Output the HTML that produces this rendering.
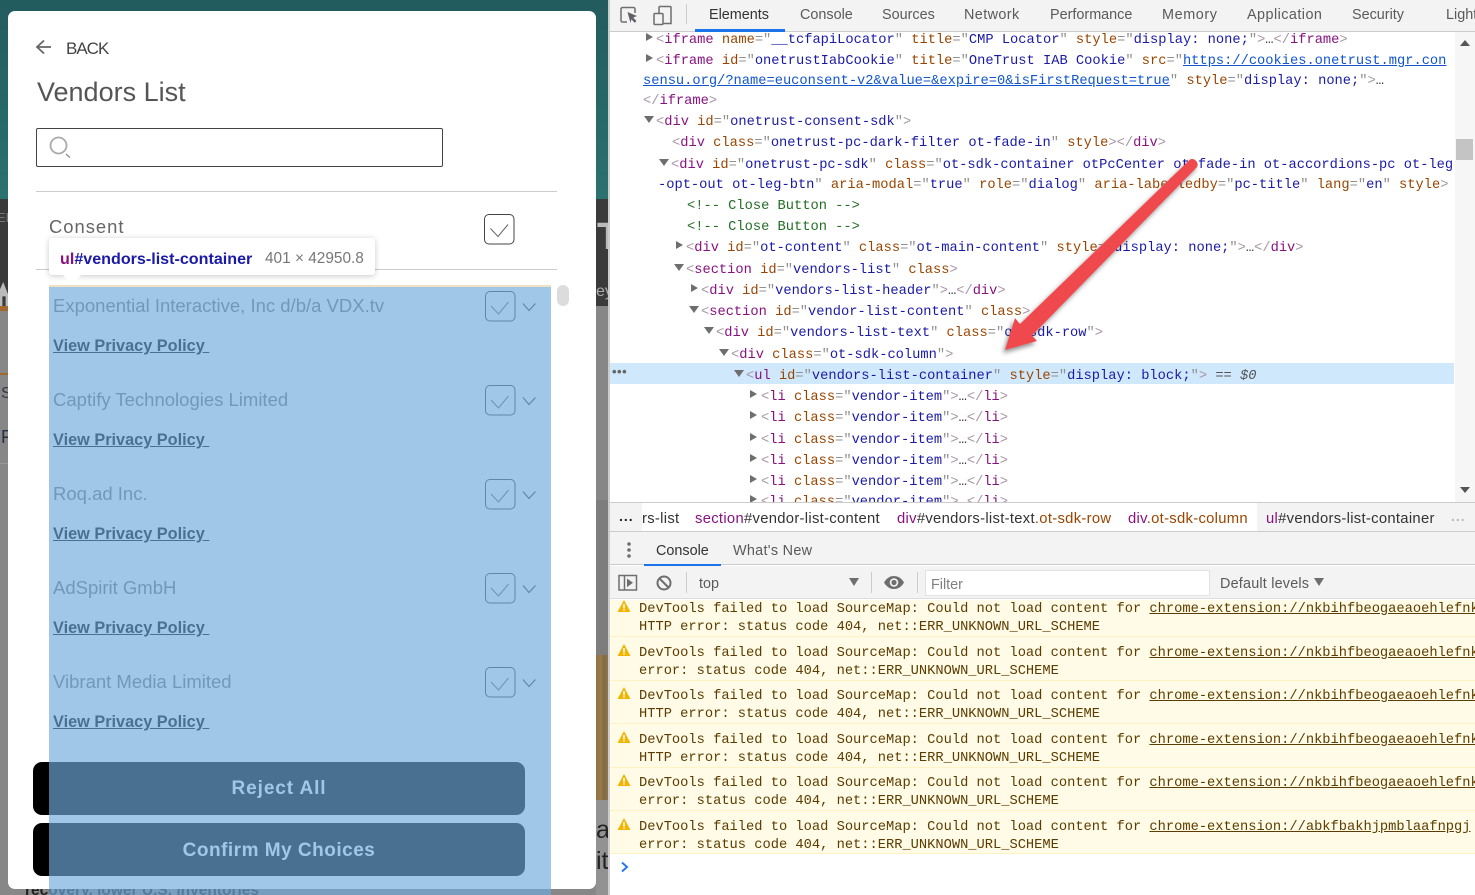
<!DOCTYPE html>
<html lang="en">
<head>
<meta charset="utf-8">
<title>Vendors List DevTools</title>
<style>
html,body{margin:0;padding:0;width:1475px;height:895px;overflow:hidden;background:#fff}
body{position:relative;font-family:"Liberation Sans",sans-serif}
div{box-sizing:border-box}
.x{position:absolute}
.a{position:absolute;white-space:nowrap;line-height:20px}
#code .a,.msg .a{font-family:"Liberation Mono",monospace;font-size:13.73px;letter-spacing:0;margin-top:3px}
#code .a{color:#a894a6}
#code .a.c{color:#236e25}
#code .a.s{font-family:"Liberation Sans",sans-serif;font-size:13px;font-weight:bold;color:#666;letter-spacing:.5px;margin-top:0}
.t{color:#881280}.n{color:#994500}.v{color:#1a1aa6}.g{color:#909090}.l{color:#15c;text-decoration:underline}.k{color:#333}
.tri{position:absolute;width:0;height:0}
.r{border-top:4px solid transparent;border-bottom:4px solid transparent;border-left:7px solid #6e6e6e}
.d{border-left:5px solid transparent;border-right:5px solid transparent;border-top:7px solid #6e6e6e}
.tab{font-size:14.4px;color:#5a5a5a;top:5px}
.bc{font-size:14.8px;letter-spacing:.3px;color:#333;top:509px}
.msg{position:absolute;left:0;top:0;width:1475px;height:895px;overflow:hidden}
.msg .a{color:#5c3c00}
.msg u{text-decoration:underline}
.sep{position:absolute;left:610px;width:865px;height:1px;background:#fff3c4}
.vn{font-size:18.5px;color:#777;left:53px}
.vl{font-size:16.3px;font-weight:bold;color:#000;left:53px;text-decoration:underline}
.btn{position:absolute;left:33px;width:492px;height:53px;background:#000;border-radius:9px;color:#fff;font-weight:bold;font-size:19px;text-align:center}
</style>
</head>
<body>

<!-- page behind the modal -->
<div class="x" style="left:0;top:0;width:608px;height:199px;background:linear-gradient(#235b5e,#2a7270)"></div>
<div class="x" style="left:0;top:199px;width:608px;height:107px;background:#3a3a3a"></div>
<div class="x" style="left:0;top:306px;width:608px;height:589px;background:#878787"></div>
<div class="x" style="left:0;top:306px;width:8px;height:5px;background:#a5682c"></div>
<div class="x" style="left:0;top:373px;width:8px;height:2px;background:#a5682c"></div>
<div class="x" style="left:0;top:463px;width:8px;height:1px;background:#999"></div>
<div class="a" style="left:-3px;top:208px;font-size:13px;color:#777">ED</div>
<div class="x" style="left:0;top:282px;width:8px;height:24px;background:#bbb;clip-path:polygon(0 30%,40% 0,100% 50%,100% 100%,70% 100%,70% 60%,30% 60%,30% 100%,0 100%)"></div>
<div class="a" style="left:1px;top:384px;font-size:16px;color:#33394a">S</div>
<div class="a" style="left:1px;top:427px;font-size:18px;color:#26304a">F</div>
<div class="x" style="left:596px;top:218px;width:12px;height:38px;overflow:hidden"><div class="a" style="left:1px;top:0;font-size:38px;line-height:38px;color:#bbb;font-weight:bold">T</div></div>
<div class="a" style="left:596px;top:282px;font-size:16px;color:#aaa">ey</div>
<div class="x" style="left:596px;top:500px;width:12px;height:155px;background:#7d7d7d"></div>
<div class="x" style="left:596px;top:655px;width:12px;height:145px;background:linear-gradient(90deg,#8e7344,#9a7a48 40%,#7c6a48 70%,#93764a)"></div>
<div class="x" style="left:596px;top:800px;width:12px;height:95px;background:#929292"></div>
<div class="x" style="left:596px;top:815px;width:12px;height:70px;overflow:hidden">
<div class="a" style="left:0;top:5px;font-size:25px;color:#222">a</div>
<div class="a" style="left:0;top:36px;font-size:25px;color:#222">it</div>
</div>
<div class="a" style="left:25px;top:881px;font-size:15.5px;font-weight:bold;color:#222">recovery, lower U.S. inventories</div>

<!-- modal -->
<div class="x" style="left:8px;top:11px;width:588px;height:878px;background:#fff;border-radius:7px"></div>
<svg class="x" style="left:34px;top:38px" width="20" height="18" viewBox="0 0 20 18"><path d="M10 2.500 3 9l7 6.500M3 9h14" fill="none" stroke="#666" stroke-width="1.800"/></svg>
<div class="a" style="left:66px;top:39px;font-size:17px;color:#444;letter-spacing:-1px">BACK</div>
<div class="a" style="left:37px;top:77px;font-size:27px;line-height:30px;color:#555">Vendors List</div>
<div class="x" style="left:36px;top:128px;width:407px;height:39px;border:1px solid #444;border-radius:2px"></div>
<svg class="x" style="left:47px;top:134px" width="26" height="26" viewBox="0 0 26 26"><circle cx="11.500" cy="11.500" r="8" fill="none" stroke="#aaa" stroke-width="1.800"/><path d="M19 20l4 3.500" stroke="#888" stroke-width="1.200"/></svg>
<div class="x" style="left:36px;top:191px;width:521px;height:1px;background:#ccc"></div>
<div class="a" style="left:49px;top:217px;font-size:18.4px;color:#666;letter-spacing:1px">Consent</div>
<svg class="x" style="left:484px;top:214px" width="31" height="31" viewBox="0 0 31 31"><rect x=".5" y=".5" width="29.500" height="29.500" rx="4.500" fill="#fff" stroke="#444"/><path d="M6.500 14.500l7.500 8 10-12" fill="none" stroke="#666"/></svg>
<div class="x" style="left:36px;top:269px;width:521px;height:1px;background:#ccc"></div>
<div class="x" style="left:557px;top:285px;width:12px;height:21px;background:#dcdcdc;border-radius:6px"></div>

<div class="a vn" style="top:296px">Exponential Interactive, Inc d/b/a VDX.tv</div>
<div class="a vl" style="top:336px">View Privacy Policy&nbsp;</div>
<div class="a vn" style="top:390px">Captify Technologies Limited</div>
<div class="a vl" style="top:430px">View Privacy Policy&nbsp;</div>
<div class="a vn" style="top:484px">Roq.ad Inc.</div>
<div class="a vl" style="top:524px">View Privacy Policy&nbsp;</div>
<div class="a vn" style="top:578px">AdSpirit GmbH</div>
<div class="a vl" style="top:618px">View Privacy Policy&nbsp;</div>
<div class="a vn" style="top:672px">Vibrant Media Limited</div>
<div class="a vl" style="top:712px">View Privacy Policy&nbsp;</div>

<svg class="x" style="left:484px;top:285px" width="56" height="420" viewBox="0 0 56 420" fill="none">
<g><rect x="1.500" y="6.500" width="29.500" height="29.500" rx="4.500" stroke="#444"/><path d="M7 21l7.500 8 10-12" stroke="#666"/><path d="M39 18.500l6 7 6.500-7" stroke="#444" stroke-width="1.200"/></g>
<g transform="translate(0 94)"><rect x="1.500" y="6.500" width="29.500" height="29.500" rx="4.500" stroke="#444"/><path d="M7 21l7.500 8 10-12" stroke="#666"/><path d="M39 18.500l6 7 6.500-7" stroke="#444" stroke-width="1.200"/></g>
<g transform="translate(0 188)"><rect x="1.500" y="6.500" width="29.500" height="29.500" rx="4.500" stroke="#444"/><path d="M7 21l7.500 8 10-12" stroke="#666"/><path d="M39 18.500l6 7 6.500-7" stroke="#444" stroke-width="1.200"/></g>
<g transform="translate(0 282)"><rect x="1.500" y="6.500" width="29.500" height="29.500" rx="4.500" stroke="#444"/><path d="M7 21l7.500 8 10-12" stroke="#666"/><path d="M39 18.500l6 7 6.500-7" stroke="#444" stroke-width="1.200"/></g>
<g transform="translate(0 376)"><rect x="1.500" y="6.500" width="29.500" height="29.500" rx="4.500" stroke="#444"/><path d="M7 21l7.500 8 10-12" stroke="#666"/><path d="M39 18.500l6 7 6.500-7" stroke="#444" stroke-width="1.200"/></g>
</svg>

<div class="btn" style="top:762px;line-height:53px;letter-spacing:.9px">Reject All</div>
<div class="btn" style="top:823px;line-height:56px;letter-spacing:.5px">Confirm My Choices</div>

<!-- element highlight -->
<div class="x" style="left:49px;top:285px;width:502px;height:2px;background:#efe2c2"></div>
<div class="x" style="left:49px;top:287px;width:502px;height:608px;background:rgba(111,168,220,.66)"></div>

<!-- inspector tooltip -->
<div class="x" style="left:49px;top:238px;width:326px;height:37px;background:#fff;border-radius:3px;box-shadow:0 1px 6px rgba(0,0,0,.22)"></div>
<div class="x" style="left:63px;top:275px;width:18px;height:10px;background:#fff;clip-path:polygon(0 0,100% 0,50% 100%)"></div>
<div class="a" style="left:60px;top:249px;font-size:16.1px;font-weight:bold;color:#1a1aa6"><span style="color:#881280">ul</span>#vendors-list-container</div>
<div class="a" style="left:265px;top:249px;font-size:15.4px;color:#777">401 × 42950.8</div>

<!-- devtools -->
<div class="x" style="left:608px;top:0;width:867px;height:895px;background:#fff;border-left:2px solid #ccc"></div>

<div id="code" class="x" style="left:0;top:0;width:1454px;height:502px;overflow:hidden">
<div class="a" style="left:656px;top:28px">&lt;<span class="t">iframe</span> <span class="n">name</span><span class="g">="</span><span class="v">__tcfapiLocator</span><span class="g">"</span> <span class="n">title</span><span class="g">="</span><span class="v">CMP Locator</span><span class="g">"</span> <span class="n">style</span><span class="g">="</span><span class="v">display: none;</span><span class="g">"</span>&gt;<span class="k">…</span>&lt;/<span class="t">iframe</span>&gt;</div>
<div class="a" style="left:656px;top:49px">&lt;<span class="t">iframe</span> <span class="n">id</span><span class="g">="</span><span class="v">onetrustIabCookie</span><span class="g">"</span> <span class="n">title</span><span class="g">="</span><span class="v">OneTrust IAB Cookie</span><span class="g">"</span> <span class="n">src</span><span class="g">="</span><span class="l">https://cookies.onetrust.mgr.con</span></div>
<div class="a" style="left:643px;top:69px"><span class="l">sensu.org/?name=euconsent-v2&amp;value=&amp;expire=0&amp;isFirstRequest=true</span><span class="g">"</span> <span class="n">style</span><span class="g">="</span><span class="v">display: none;</span><span class="g">"</span>&gt;<span class="k">…</span></div>
<div class="a" style="left:643px;top:89px">&lt;/<span class="t">iframe</span>&gt;</div>
<div class="a" style="left:656px;top:110px">&lt;<span class="t">div</span> <span class="n">id</span><span class="g">="</span><span class="v">onetrust-consent-sdk</span><span class="g">"</span>&gt;</div>
<div class="a" style="left:672px;top:131px">&lt;<span class="t">div</span> <span class="n">class</span><span class="g">="</span><span class="v">onetrust-pc-dark-filter ot-fade-in</span><span class="g">"</span> <span class="n">style</span>&gt;&lt;/<span class="t">div</span>&gt;</div>
<div class="a" style="left:671px;top:153px">&lt;<span class="t">div</span> <span class="n">id</span><span class="g">="</span><span class="v">onetrust-pc-sdk</span><span class="g">"</span> <span class="n">class</span><span class="g">="</span><span class="v">ot-sdk-container otPcCenter ot-fade-in ot-accordions-pc ot-leg</span></div>
<div class="a" style="left:658px;top:173px"><span class="v">-opt-out ot-leg-btn</span><span class="g">"</span> <span class="n">aria-modal</span><span class="g">="</span><span class="v">true</span><span class="g">"</span> <span class="n">role</span><span class="g">="</span><span class="v">dialog</span><span class="g">"</span> <span class="n">aria-labelledby</span><span class="g">="</span><span class="v">pc-title</span><span class="g">"</span> <span class="n">lang</span><span class="g">="</span><span class="v">en</span><span class="g">"</span> <span class="n">style</span>&gt;</div>
<div class="a c" style="left:687px;top:194px">&lt;!-- Close Button --&gt;</div>
<div class="a c" style="left:687px;top:215px">&lt;!-- Close Button --&gt;</div>
<div class="a" style="left:686px;top:236px">&lt;<span class="t">div</span> <span class="n">id</span><span class="g">="</span><span class="v">ot-content</span><span class="g">"</span> <span class="n">class</span><span class="g">="</span><span class="v">ot-main-content</span><span class="g">"</span> <span class="n">style</span><span class="g">="</span><span class="v">display: none;</span><span class="g">"</span>&gt;<span class="k">…</span>&lt;/<span class="t">div</span>&gt;</div>
<div class="a" style="left:686px;top:258px">&lt;<span class="t">section</span> <span class="n">id</span><span class="g">="</span><span class="v">vendors-list</span><span class="g">"</span> <span class="n">class</span>&gt;</div>
<div class="a" style="left:701px;top:279px">&lt;<span class="t">div</span> <span class="n">id</span><span class="g">="</span><span class="v">vendors-list-header</span><span class="g">"</span>&gt;<span class="k">…</span>&lt;/<span class="t">div</span>&gt;</div>
<div class="a" style="left:701px;top:300px">&lt;<span class="t">section</span> <span class="n">id</span><span class="g">="</span><span class="v">vendor-list-content</span><span class="g">"</span> <span class="n">class</span>&gt;</div>
<div class="a" style="left:716px;top:321px">&lt;<span class="t">div</span> <span class="n">id</span><span class="g">="</span><span class="v">vendors-list-text</span><span class="g">"</span> <span class="n">class</span><span class="g">="</span><span class="v">ot-sdk-row</span><span class="g">"</span>&gt;</div>
<div class="a" style="left:731px;top:343px">&lt;<span class="t">div</span> <span class="n">class</span><span class="g">="</span><span class="v">ot-sdk-column</span><span class="g">"</span>&gt;</div>
<div class="x" style="left:610px;top:363px;width:844px;height:21px;background:#cfe8fc"></div>
<div class="a s" style="left:612px;top:362px">•••</div>
<div class="a" style="left:746px;top:364px">&lt;<span class="t">ul</span> <span class="n">id</span><span class="g">="</span><span class="v">vendors-list-container</span><span class="g">"</span> <span class="n">style</span><span class="g">="</span><span class="v">display: block;</span><span class="g">"</span>&gt; <span style="color:#555">==</span> <i style="color:#555">$0</i></div>
<div class="a" style="left:761px;top:385px">&lt;<span class="t">li</span> <span class="n">class</span><span class="g">="</span><span class="v">vendor-item</span><span class="g">"</span>&gt;<span class="k">…</span>&lt;/<span class="t">li</span>&gt;</div>
<div class="a" style="left:761px;top:406px">&lt;<span class="t">li</span> <span class="n">class</span><span class="g">="</span><span class="v">vendor-item</span><span class="g">"</span>&gt;<span class="k">…</span>&lt;/<span class="t">li</span>&gt;</div>
<div class="a" style="left:761px;top:428px">&lt;<span class="t">li</span> <span class="n">class</span><span class="g">="</span><span class="v">vendor-item</span><span class="g">"</span>&gt;<span class="k">…</span>&lt;/<span class="t">li</span>&gt;</div>
<div class="a" style="left:761px;top:449px">&lt;<span class="t">li</span> <span class="n">class</span><span class="g">="</span><span class="v">vendor-item</span><span class="g">"</span>&gt;<span class="k">…</span>&lt;/<span class="t">li</span>&gt;</div>
<div class="a" style="left:761px;top:470px">&lt;<span class="t">li</span> <span class="n">class</span><span class="g">="</span><span class="v">vendor-item</span><span class="g">"</span>&gt;<span class="k">…</span>&lt;/<span class="t">li</span>&gt;</div>
<div class="a" style="left:761px;top:490px">&lt;<span class="t">li</span> <span class="n">class</span><span class="g">="</span><span class="v">vendor-item</span><span class="g">"</span>&gt;<span class="k">…</span>&lt;/<span class="t">li</span>&gt;</div>

<div class="tri r" style="left:646px;top:33px"></div>
<div class="tri r" style="left:646px;top:54px"></div>
<div class="tri d" style="left:644px;top:116px"></div>
<div class="tri d" style="left:659px;top:159px"></div>
<div class="tri r" style="left:676px;top:241px"></div>
<div class="tri d" style="left:674px;top:264px"></div>
<div class="tri r" style="left:691px;top:284px"></div>
<div class="tri d" style="left:689px;top:306px"></div>
<div class="tri d" style="left:704px;top:327px"></div>
<div class="tri d" style="left:719px;top:349px"></div>
<div class="tri d" style="left:734px;top:370px"></div>
<div class="tri r" style="left:750px;top:390px"></div>
<div class="tri r" style="left:750px;top:411px"></div>
<div class="tri r" style="left:750px;top:433px"></div>
<div class="tri r" style="left:750px;top:454px"></div>
<div class="tri r" style="left:750px;top:475px"></div>
<div class="tri r" style="left:750px;top:495px"></div>
</div>

<!-- elements scrollbar -->
<div class="x" style="left:1455px;top:32px;width:20px;height:470px;background:#f6f6f6"></div>
<div class="x" style="left:1456px;top:139px;width:17px;height:21px;background:#c4c4c4"></div>
<div class="tri" style="left:1460px;top:40px;border-left:5px solid transparent;border-right:5px solid transparent;border-bottom:6px solid #555"></div>
<div class="tri" style="left:1460px;top:487px;border-left:5px solid transparent;border-right:5px solid transparent;border-top:6px solid #555"></div>

<!-- top tabs -->
<div class="x" style="left:610px;top:0;width:865px;height:32px;background:#f3f3f3;border-bottom:1px solid #ccc"></div>
<svg class="x" style="left:618px;top:4px" width="60" height="22" viewBox="0 0 60 22" fill="none">
<path d="M9 18H4.500a1.500 1.500 0 0 1-1.500-1.500V5a1.500 1.500 0 0 1 1.500-1.500h11A1.500 1.500 0 0 1 17 5v4" stroke="#6e6e6e" stroke-width="1.500"/>
<path d="M9.500 8l9.500 4-3.800 1.600 3.300 3.400-1.800 1.800-3.300-3.400L12.500 19z" fill="#5f6368"/>
<path d="M41 2.500h11a1 1 0 0 1 1 1v16H41M41 2.500V9" stroke="#6e6e6e" stroke-width="1.500"/>
<rect x="36" y="9.500" width="9" height="11" rx="1" stroke="#6e6e6e" stroke-width="1.500" fill="#f3f3f3"/>
</svg>
<div class="x" style="left:686px;top:4px;width:1px;height:20px;background:#ccc"></div>
<div class="a tab" style="left:709px;color:#333">Elements</div>
<div class="a tab" style="left:800px">Console</div>
<div class="a tab" style="left:882px">Sources</div>
<div class="a tab" style="left:964px;letter-spacing:.4px">Network</div>
<div class="a tab" style="left:1050px">Performance</div>
<div class="a tab" style="left:1162px;letter-spacing:.6px">Memory</div>
<div class="a tab" style="left:1247px;letter-spacing:.45px">Application</div>
<div class="a tab" style="left:1352px">Security</div>
<div class="x" style="left:1446px;top:0;width:29px;height:31px;overflow:hidden"><div class="a tab" style="left:0">Light</div></div>
<div class="x" style="left:695px;top:29px;width:90px;height:3px;background:#1a73e8"></div>

<!-- breadcrumbs -->
<div class="x" style="left:610px;top:502px;width:865px;height:1px;background:#ccc"></div>
<div class="x" style="left:610px;top:531px;width:865px;height:1px;background:#ccc"></div>
<div class="x" style="left:610px;top:503px;width:32px;height:28px;background:#f3f3f3"></div>
<div class="x" style="left:1257px;top:503px;width:218px;height:28px;background:#f3f3f3"></div>
<div class="a" style="left:619px;top:506px;font-size:14px;font-weight:bold;color:#222;letter-spacing:1px">...</div>
<div class="a bc" style="left:642px">rs-list</div>
<div class="a bc" style="left:695px"><span style="color:#881280">section</span>#vendor-list-content</div>
<div class="a bc" style="left:897px"><span style="color:#881280">div</span>#vendors-list-text<span style="color:#994500">.ot-sdk-row</span></div>
<div class="a bc" style="left:1128px"><span style="color:#881280">div</span><span style="color:#994500">.ot-sdk-column</span></div>
<div class="a bc" style="left:1266px"><span style="color:#881280">ul</span>#vendors-list-container</div>
<div class="a" style="left:1451px;top:506px;font-size:14px;font-weight:bold;color:#bbb;letter-spacing:1px">...</div>

<!-- drawer tabs -->
<div class="x" style="left:610px;top:532px;width:865px;height:33px;background:#f3f3f3;border-bottom:1px solid #ccc"></div>
<svg class="x" style="left:625px;top:541px" width="8" height="18"><circle cx="4" cy="3" r="1.800" fill="#6e6e6e"/><circle cx="4" cy="9" r="1.800" fill="#6e6e6e"/><circle cx="4" cy="15" r="1.800" fill="#6e6e6e"/></svg>
<div class="a" style="left:656px;top:541px;font-size:14.4px;color:#333">Console</div>
<div class="a" style="left:733px;top:541px;font-size:14.4px;letter-spacing:.3px;color:#5a5a5a">What's New</div>
<div class="x" style="left:644px;top:564px;width:77px;height:2px;background:#1a73e8"></div>

<!-- console toolbar -->
<div class="x" style="left:610px;top:566px;width:865px;height:33px;background:#f3f3f3;border-bottom:1px solid #ddd"></div>
<svg class="x" style="left:616px;top:572px" width="60" height="22" viewBox="0 0 60 22" fill="none">
<rect x="3" y="3.500" width="17.500" height="14.500" stroke="#6e6e6e" stroke-width="1.500"/><path d="M8.500 3.500v14.500" stroke="#6e6e6e" stroke-width="1.500"/><path d="M11 6.500l6 4.300-6 4.300z" fill="#6e6e6e"/>
<circle cx="48" cy="11" r="6.500" stroke="#6e6e6e" stroke-width="2"/><path d="M43.500 6.500l9 9" stroke="#6e6e6e" stroke-width="2"/>
</svg>
<div class="x" style="left:686px;top:572px;width:1px;height:21px;background:#ccc"></div>
<div class="a" style="left:699px;top:574px;font-size:14.4px;color:#5a5a5a">top</div>
<div class="tri" style="left:849px;top:578px;border-left:5px solid transparent;border-right:5px solid transparent;border-top:8px solid #6e6e6e"></div>
<div class="x" style="left:871px;top:572px;width:1px;height:21px;background:#ccc"></div>
<svg class="x" style="left:884px;top:575px" width="20" height="15" viewBox="0 0 20 15"><path d="M0 7.500C3 2.500 6.500 1 10 1s7 1.500 10 6.500C17 12.500 13.500 14 10 14S3 12.500 0 7.500z" fill="#6e6e6e"/><circle cx="10" cy="7.500" r="4.300" fill="#f3f3f3"/><circle cx="10" cy="7.500" r="2.600" fill="#6e6e6e"/></svg>
<div class="x" style="left:917px;top:572px;width:1px;height:21px;background:#ccc"></div>
<div class="x" style="left:925px;top:570px;width:285px;height:26px;background:#fff;border:1px solid #e2e2e2"></div>
<div class="a" style="left:931px;top:575px;font-size:14.4px;color:#808080">Filter</div>
<div class="a" style="left:1220px;top:574px;font-size:14.4px;letter-spacing:.2px;color:#5a5a5a">Default levels</div>
<div class="tri" style="left:1314px;top:578px;border-left:5px solid transparent;border-right:5px solid transparent;border-top:8px solid #6e6e6e"></div>

<!-- console messages -->
<div class="x" style="left:610px;top:600px;width:865px;height:253px;background:#fffbe6"></div>
<div class="sep" style="top:636px"></div>
<div class="sep" style="top:680px"></div>
<div class="sep" style="top:723px"></div>
<div class="sep" style="top:767px"></div>
<div class="sep" style="top:810px"></div>
<div class="sep" style="top:853px"></div>
<div class="msg">
<div class="a" style="left:639px;top:597px">DevTools failed to load SourceMap: Could not load content for <u>chrome-extension://nkbihfbeogaeaoehlefnk</u></div>
<div class="a" style="left:639px;top:615px">HTTP error: status code 404, net::ERR_UNKNOWN_URL_SCHEME</div>
<div class="a" style="left:639px;top:641px">DevTools failed to load SourceMap: Could not load content for <u>chrome-extension://nkbihfbeogaeaoehlefnk</u></div>
<div class="a" style="left:639px;top:659px">error: status code 404, net::ERR_UNKNOWN_URL_SCHEME</div>
<div class="a" style="left:639px;top:684px">DevTools failed to load SourceMap: Could not load content for <u>chrome-extension://nkbihfbeogaeaoehlefnk</u></div>
<div class="a" style="left:639px;top:702px">HTTP error: status code 404, net::ERR_UNKNOWN_URL_SCHEME</div>
<div class="a" style="left:639px;top:728px">DevTools failed to load SourceMap: Could not load content for <u>chrome-extension://nkbihfbeogaeaoehlefnk</u></div>
<div class="a" style="left:639px;top:746px">HTTP error: status code 404, net::ERR_UNKNOWN_URL_SCHEME</div>
<div class="a" style="left:639px;top:771px">DevTools failed to load SourceMap: Could not load content for <u>chrome-extension://nkbihfbeogaeaoehlefnk</u></div>
<div class="a" style="left:639px;top:789px">error: status code 404, net::ERR_UNKNOWN_URL_SCHEME</div>
<div class="a" style="left:639px;top:815px">DevTools failed to load SourceMap: Could not load content for <u>chrome-extension://abkfbakhjpmblaafnpgj</u></div>
<div class="a" style="left:639px;top:833px">error: status code 404, net::ERR_UNKNOWN_URL_SCHEME</div>
</div>
<svg class="x" style="left:617px;top:599px" width="14" height="234" viewBox="0 0 14 234">
<g fill="#f4b400"><path d="M7 1l6.500 12H.5z"/><path d="M7 45l6.500 12H.5z"/><path d="M7 88l6.500 12H.5z"/><path d="M7 132l6.500 12H.5z"/><path d="M7 175l6.500 12H.5z"/><path d="M7 219l6.500 12H.5z"/></g>
<g fill="#fff"><path d="M6.200 5h1.600v4.500H6.200zM6.200 10.300h1.600v1.500H6.200z"/><path d="M6.200 49h1.600v4.500H6.200zM6.200 54.300h1.600v1.500H6.200z"/><path d="M6.200 92h1.600v4.500H6.200zM6.200 97.300h1.600v1.500H6.200z"/><path d="M6.200 136h1.600v4.500H6.200zM6.200 141.300h1.600v1.500H6.200z"/><path d="M6.200 179h1.600v4.500H6.200zM6.200 184.300h1.600v1.500H6.200z"/><path d="M6.200 223h1.600v4.500H6.200zM6.200 228.300h1.600v1.500H6.200z"/></g>
</svg>
<svg class="x" style="left:620px;top:861px" width="10" height="12" viewBox="0 0 10 12"><path d="M2 1.500 7 6l-5 4.500" fill="none" stroke="#2a78ee" stroke-width="2"/></svg>

<!-- red annotation arrow -->
<svg class="x" style="left:990px;top:150px" width="220" height="215" viewBox="990 150 220 215">
<defs><filter id="sh" x="-20%" y="-20%" width="140%" height="140%"><feDropShadow dx="-2" dy="3" stdDeviation="2.500" flood-color="#000" flood-opacity=".45"/></filter></defs>
<path filter="url(#sh)" fill="#f04a4e" d="M1190 159.500a5.500 5.500 0 0 1 7 7.500L1032 335.500l5 5.500-32 9 10-32 5 6z"/>
</svg>

</body>
</html>
